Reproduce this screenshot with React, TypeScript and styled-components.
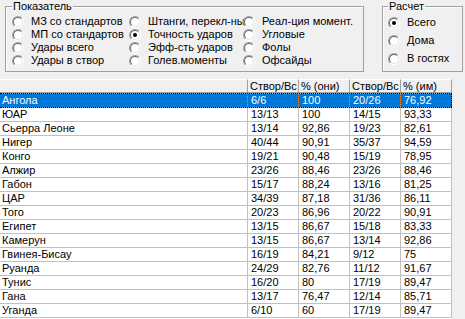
import React from "react";
import styled, { createGlobalStyle } from "styled-components";

const GlobalStyle = createGlobalStyle`
  html, body {
    margin: 0;
    padding: 0;
    overflow: hidden;
    background: #f0f0f0;
  }
  body {
    font-family: "Liberation Sans", Arial, sans-serif;
    font-size: 11px;
    color: #000;
  }
`;

const Page = styled.div`
  width: 465px;
  height: 319px;
  display: flex;
  flex-direction: column;
`;

const TopPanel = styled.div`
  height: 79px;
  box-sizing: border-box;
  padding: 0 0 7px 5px;
  display: flex;
  align-items: stretch;
  gap: 18px;
`;

const Group = styled.fieldset<{ $width: number; $padLeft: number }>`
  box-sizing: border-box;
  width: ${(p) => p.$width}px;
  margin: 0;
  padding: 2px 0 0 ${(p) => p.$padLeft}px;
  border: 1px solid #a0a0a0;
  box-shadow: inset 1px 1px 0 #fff;
  min-width: 0;
`;

const Legend = styled.legend`
  padding: 0 1px;
  margin: 0;
  line-height: 13px;
  font-size: 11px;
`;

const ShowGrid = styled.div`
  display: grid;
  grid-template-columns: 117px 114px 1fr;
  grid-auto-rows: 13px;
`;

const CalcList = styled.div`
  display: flex;
  flex-direction: column;
  gap: 5px;
  padding-top: 1px;
`;

const RadioItem = styled.label`
  display: flex;
  align-items: center;
  gap: 7px;
  height: 13px;
  line-height: 13px;
  white-space: nowrap;
`;

const RadioMark = styled.span<{ $checked?: boolean }>`
  position: relative;
  flex: none;
  width: 12px;
  height: 12px;
  box-sizing: border-box;
  border-radius: 50%;
  border: 1px solid;
  border-color: #a0a0a0 #fff #fff #a0a0a0;
  &::before {
    content: "";
    position: absolute;
    inset: 0;
    border-radius: 50%;
    border: 1px solid;
    border-color: #696969 #e3e3e3 #e3e3e3 #696969;
    background: #fff;
  }
  &::after {
    content: "";
    display: ${(p) => (p.$checked ? "block" : "none")};
    position: absolute;
    left: 3px;
    top: 3px;
    width: 4px;
    height: 4px;
    border-radius: 50%;
    background: #000;
  }
`;

const Table = styled.div`
  flex: 1;
  width: 452px;
  background: #fff;
  display: flex;
  flex-direction: column;
`;

const COLS = "248px 51px 51px 51px 51px";

const HeaderRow = styled.div`
  display: grid;
  grid-template-columns: ${COLS};
  height: 14px;
  background: #f0f0f0;
`;

const HeaderCell = styled.div`
  box-sizing: border-box;
  border-top: 1px solid #fff;
  border-right: 1px solid #a0a0a0;
  border-bottom: 1px solid #a0a0a0;
  padding-left: 2px;
  line-height: 12px;
  overflow: hidden;
  white-space: nowrap;
`;

const Row = styled.div<{ $selected?: boolean }>`
  display: grid;
  grid-template-columns: ${COLS};
  box-sizing: border-box;
  height: ${(p) => (p.$selected ? 15 : 14)}px;
  border-bottom: 1px ${(p) => (p.$selected ? "dotted #000" : "solid #c0c0c0")};
  border-top: ${(p) => (p.$selected ? "1px dotted #000" : "none")};
  background: ${(p) =>
    p.$selected
      ? "linear-gradient(#0078d7, #0078d7) padding-box, #ff8728"
      : "#fff"};
  color: ${(p) => (p.$selected ? "#fff" : "#000")};
`;

const Cell = styled.div<{ $selected?: boolean; $first?: boolean; $last?: boolean }>`
  box-sizing: border-box;
  padding-left: ${(p) => (p.$first ? 2 : 3)}px;
  line-height: 13px;
  overflow: hidden;
  white-space: nowrap;
  border-right: 1px
    ${(p) =>
      p.$selected
        ? p.$last
          ? "dotted #000"
          : "dotted #ff8728"
        : "solid #c0c0c0"};
`;

const showOptions: { label: string; checked?: boolean }[][] = [
  [
    { label: "МЗ со стандартов" },
    { label: "Штанги, перекл-ны" },
    { label: "Реал-ция момент." },
  ],
  [
    { label: "МП со стандартов" },
    { label: "Точность ударов", checked: true },
    { label: "Угловые" },
  ],
  [{ label: "Удары всего" }, { label: "Эфф-сть ударов" }, { label: "Фолы" }],
  [{ label: "Удары в створ" }, { label: "Голев.моменты" }, { label: "Офсайды" }],
];

const calcOptions = [
  { label: "Всего", checked: true },
  { label: "Дома" },
  { label: "В гостях" },
];

const headers = ["", "Створ/Вс", "% (они)", "Створ/Вс", "% (им)"];

const rows: string[][] = [
  ["Ангола", "6/6", "100", "20/26", "76,92"],
  ["ЮАР", "13/13", "100", "14/15", "93,33"],
  ["Сьерра Леоне", "13/14", "92,86", "19/23", "82,61"],
  ["Нигер", "40/44", "90,91", "35/37", "94,59"],
  ["Конго", "19/21", "90,48", "15/19", "78,95"],
  ["Алжир", "23/26", "88,46", "23/26", "88,46"],
  ["Габон", "15/17", "88,24", "13/16", "81,25"],
  ["ЦАР", "34/39", "87,18", "31/36", "86,11"],
  ["Того", "20/23", "86,96", "20/22", "90,91"],
  ["Египет", "13/15", "86,67", "15/18", "83,33"],
  ["Камерун", "13/15", "86,67", "13/14", "92,86"],
  ["Гвинея-Бисау", "16/19", "84,21", "9/12", "75"],
  ["Руанда", "24/29", "82,76", "11/12", "91,67"],
  ["Тунис", "16/20", "80", "17/19", "89,47"],
  ["Гана", "13/17", "76,47", "12/14", "85,71"],
  ["Уганда", "6/10", "60", "17/19", "89,47"],
];

const App: React.FC = () => {
  return (
    <Page>
      <GlobalStyle />
      <TopPanel>
        <Group $width={359} $padLeft={6}>
          <Legend>Показатель</Legend>
          <ShowGrid>
            {showOptions.flat().map((o) => (
              <RadioItem key={o.label}>
                <RadioMark $checked={o.checked} />
                {o.label}
              </RadioItem>
            ))}
          </ShowGrid>
        </Group>
        <Group $width={81} $padLeft={5}>
          <Legend>Расчет</Legend>
          <CalcList>
            {calcOptions.map((o) => (
              <RadioItem key={o.label}>
                <RadioMark $checked={o.checked} />
                {o.label}
              </RadioItem>
            ))}
          </CalcList>
        </Group>
      </TopPanel>
      <Table>
        <HeaderRow>
          {headers.map((h, i) => (
            <HeaderCell key={i}>{h}</HeaderCell>
          ))}
        </HeaderRow>
        {rows.map((r, i) => (
          <Row key={r[0]} $selected={i === 0}>
            {r.map((v, j) => (
              <Cell
                key={j}
                $selected={i === 0}
                $first={j === 0}
                $last={j === r.length - 1}
              >
                {v}
              </Cell>
            ))}
          </Row>
        ))}
      </Table>
    </Page>
  );
};

export default App;
